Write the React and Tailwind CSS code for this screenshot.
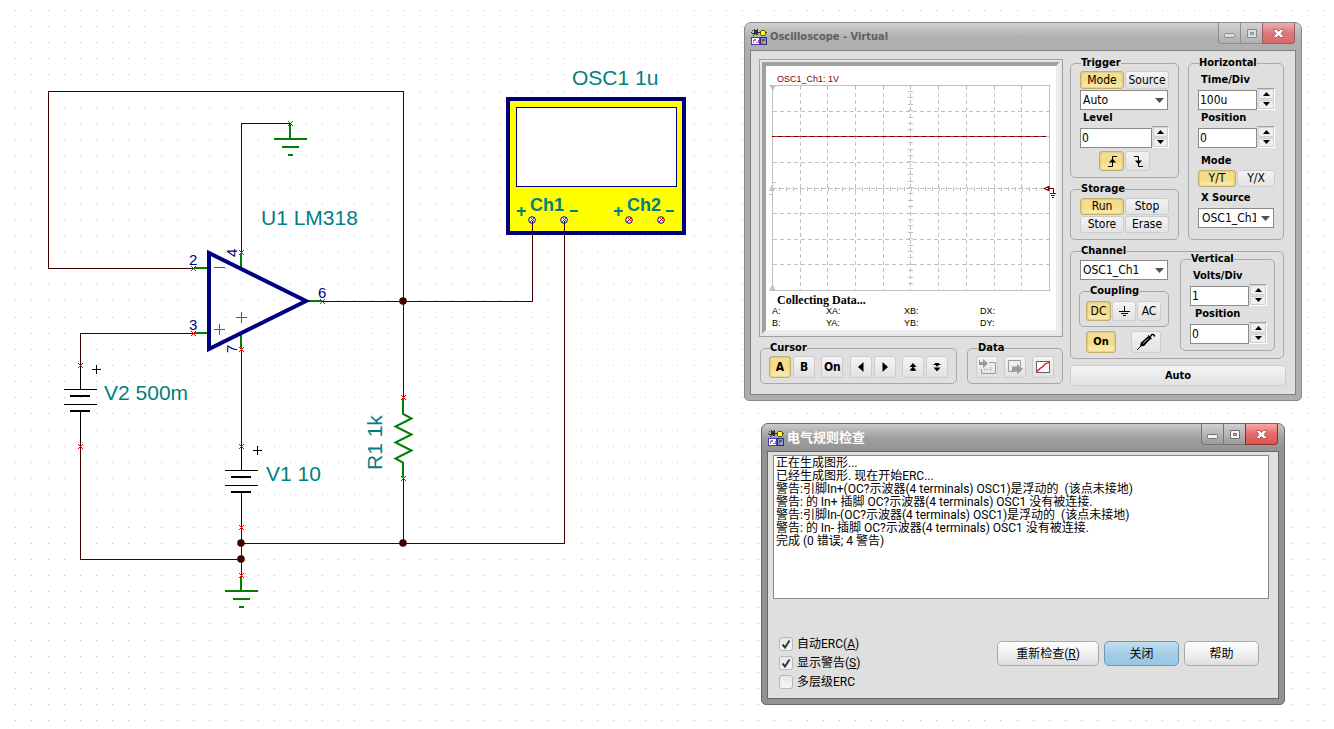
import React from "react";

const UI = "font-['DejaVu_Sans_Condensed','DejaVu_Sans','Noto_Sans_CJK_SC',sans-serif]";
const BOLD = "text-[11px] leading-4 font-bold";

/* ---------- Schematic ---------- */

const dots = (() => {
  let d = "";
  for (let i = 0; i < 160; i++)
    for (let j = 0; j < 90; j++)
      d += `M${Math.floor(15.75 + 16.15 * i)} ${Math.floor(10.25 + 16.15 * j)}h1v1h-1z`;
  return d;
})();

const PINS = [
  [193, 268], [193, 333], [322, 301], [241, 252], [241, 349], [290, 123],
  [80, 365], [80, 446], [241, 446], [241, 527], [241, 575], [403, 397], [403, 478],
];
const NODES = [[403, 301], [241, 543], [241, 559], [403, 543]];
const TERMINALS = [532, 564, 629, 661];

const cross = (x, y, r) => {
  let d = "";
  for (let k = -r; k <= r; k++) {
    d += `M${x + k} ${y + k}h1v1h-1z`;
    if (k) d += `M${x + k} ${y - k}h1v1h-1z`;
  }
  return d;
};

function Ground({ x, y }) {
  return (
    <g stroke="#008000" strokeWidth="2">
      <path d={`M${x} ${y}v15M${x - 16} ${y + 15}h33M${x - 8} ${y + 23}h17M${x - 2} ${y + 31}h5`} />
    </g>
  );
}

function Battery({ x, top, cell, bottom }) {
  return (
    <g stroke="#000" fill="none" shapeRendering="crispEdges">
      <path d={`M${x}.5 ${top}V${cell}M${x - 16} ${cell}.5h33M${x - 16} ${cell + 15}.5h33M${x}.5 ${cell + 22}V${bottom}`} />
      <path strokeWidth="2" d={`M${x - 10} ${cell + 7}h20M${x - 10} ${cell + 22}h20`} />
      <path d={`M${x + 12} ${top + 4}.5h9M${x + 16}.5 ${top}v9`} />
    </g>
  );
}

function Schematic() {
  return (
    <svg className="absolute inset-0 h-full w-full font-['Liberation_Sans',Arial,sans-serif]" role="img" aria-label="Circuit schematic">
      <path d={dots} fill="#c0c0c0" shapeRendering="crispEdges" />
      <g stroke="#400000" fill="none" shapeRendering="crispEdges">
        <path d="M193 268.5H48.5V91.5H403.5V397" />
        <path d="M241.5 252V123.5H290" />
        <path d="M322 301.5H532.5V222" />
        <path d="M193 333.5H80.5V365M80.5 446V559.5H241" />
        <path d="M241.5 349V446M241.5 527V575M403.5 478V543" />
        <path d="M241 543.5H564.5V222" />
      </g>
      <Ground x={290} y={124} />
      <Ground x={241} y={576} />
      <path d="M194 268h14M194 333h14M307 301h15M241 253v15M241 334v15" stroke="#008000" strokeWidth="2" />
      <path d="M209 253V349L306 301Z" fill="none" stroke="#000080" strokeWidth="4" />
      <path d="M214 267.5h11M214 329.5h11M219.5 324v11M236 317.5h11M241.5 312v11" stroke="#008080" shapeRendering="crispEdges" />
      <path d="M403 398v16l8.500 4.500l-16 8l16 8l-16 8l16 8l-16 8l7.500 4v15" fill="none" stroke="#008000" strokeWidth="2" />
      <Battery x={80} top={365} cell={389} bottom={446} />
      <Battery x={241} top={446} cell={470} bottom={527} />

      <rect x="508" y="99" width="176" height="134" fill="#ff0" stroke="#000080" strokeWidth="4" />
      <rect x="516.500" y="107.500" width="160" height="79" fill="#fff" stroke="#000080" />
      <g fill="#008080" fontSize="18" fontWeight="bold">
        <text x="530" y="211">Ch1</text>
        <text x="627" y="211">Ch2</text>
      </g>
      <path d="M517 211h9M521.500 207v9M570 211h8M614 211h9M618.500 207v9M666 211h8" stroke="#008080" strokeWidth="2" />
      {TERMINALS.map((x) => (
        <circle key={x} cx={x} cy="220" r="3.300" fill="#fff" stroke="#000080" />
      ))}
      <path d={TERMINALS.map((x) => cross(x, 219, 2)).join("")} fill="#f00000" shapeRendering="crispEdges" />
      <path d="M532.500 221v12M564.500 221v12" stroke="#400000" shapeRendering="crispEdges" />

      <path d={PINS.map(([x, y]) => cross(x, y, 2)).join("")} fill="#f00000" shapeRendering="crispEdges" />
      {NODES.map(([x, y]) => (
        <circle key={`${x}-${y}`} cx={x} cy={y} r="3.800" fill="#400000" />
      ))}

      <g fill="#008080" fontSize="21">
        <text x="572" y="85">OSC1 1u</text>
        <text x="261" y="225">U1 LM318</text>
        <text x="104" y="400">V2 500m</text>
        <text x="266" y="481">V1 10</text>
        <text transform="translate(382 470) rotate(-90)">R1 1k</text>
      </g>
      <g fill="#000080" fontSize="15">
        <text x="189" y="265">2</text>
        <text x="189" y="330">3</text>
        <text x="318" y="298">6</text>
        <text transform="translate(237 257) rotate(-90)">4</text>
        <text transform="translate(237 353) rotate(-90)">7</text>
      </g>
    </svg>
  );
}

/* ---------- Window chrome ---------- */

function AppIcon() {
  return (
    <svg className="h-4 w-4 shrink-0" viewBox="0 0 16 16" aria-hidden="true" shapeRendering="crispEdges">
      <path d="M1 1h1v1h1V0h1v1h2V0h1v6H5V5H4v1H3V5H1V4h2V2H1zM0 3h1v1H0zM2 6h1v1H2zM7 3h2v1H7z" fill="#303030" />
      <path d="M10 1h4v1h1v4h-1v1h-4V6H9V2h1z" fill="#605800" />
      <path d="M10 2h4v4h-4z" fill="#ffff20" />
      <path d="M15 3h1v1h-1z" fill="#303030" />
      <rect x="0.500" y="8.500" width="8" height="7" fill="#fff" stroke="#4040b0" />
      <rect x="9.500" y="8.500" width="6" height="7" fill="#8090c0" stroke="#303080" />
      <path d="M2 11h1v-1h2v3h2v-2h1v3H5v-2H3v2H2z" fill="#d050e0" />
      <path d="M11 10h3v2h-3z" fill="#50606a" />
      <path d="M11 13h1v1h-1z" fill="#e03030" />
      <path d="M13 13h1v1h-1z" fill="#fff" />
    </svg>
  );
}

function WindowButtons({ active }) {
  const plain = active
    ? "border-[#747474] from-[#d0d0d0] to-[#9c9c9c]"
    : "border-[#8e8e8e] from-[#d2d2d2] to-[#b0b0b0]";
  const close = active
    ? "border-[#8a3030] from-[#f6a8a4] via-[#e66a68] to-[#e05450]"
    : "border-[#9a5a5a] from-[#eab0ae] via-[#d97a79] to-[#d86a68]";
  const ink = active ? "#f4f4f4" : "#dcdcdc";
  const edge = active ? "#707070" : "#8c8c8c";
  return (
    <div className="flex self-start">
      <button aria-label="Minimize" className={`grid h-[21px] w-[22px] place-items-center rounded-bl border-b border-l bg-linear-to-b ${plain}`}>
        <svg width="13" height="11" viewBox="0 0 13 11"><rect x="1.500" y="5.500" width="10" height="4" rx="1" fill={ink} stroke={edge} /></svg>
      </button>
      <button aria-label="Maximize" className={`grid h-[21px] w-[22px] place-items-center border-b border-l bg-linear-to-b ${plain}`}>
        <svg width="12" height="11" viewBox="0 0 12 11"><path fillRule="evenodd" d="M1.500 1.500h9v8h-9zM4.500 4.500h3v2h-3z" fill={ink} stroke={edge} /></svg>
      </button>
      <button aria-label="Close" className={`grid h-[21px] w-[33px] place-items-center rounded-br border-x border-b bg-linear-to-b ${close}`}>
        <svg width="13" height="11" viewBox="0 0 13 11"><path d="M1.500 1.500h3l2 2l2-2h3v1l-2.500 3l2.500 3v1h-3l-2-2l-2 2h-3v-1l2.500-3l-2.500-3z" fill="#fff" stroke="#9c4c4c" strokeWidth="0.800" /></svg>
      </button>
    </div>
  );
}

/* ---------- Controls ---------- */

const ON = "border-[#c3ae6c] bg-linear-to-b from-[#f3dfa0] via-[#f5dc80] to-[#fbeeb8] shadow-[inset_0_0_2px_#b89c50]";
const OFF = "border-[#cdcdcd] bg-linear-to-b from-[#f4f4f4] to-[#e2e2e2]";

function Btn({ on, className = "", children, ...rest }) {
  return (
    <button
      aria-pressed={on ? true : undefined}
      className={`flex items-center justify-center rounded-[3px] border whitespace-nowrap ${on ? ON : OFF} ${className}`}
      {...rest}
    >
      {children}
    </button>
  );
}

function Group({ title, className = "", legend = "", children }) {
  return (
    <fieldset className={`min-w-0 rounded-[5px] border border-[#a8a8a8] ${className}`}>
      <legend className={`text-[11px] leading-3 font-bold ${legend}`}>{title}</legend>
      {children}
    </fieldset>
  );
}

function Select({ id, value, label, className = "", pad = "pl-[2px] pr-[15px]" }) {
  return (
    <div className={`grid h-5 border border-[#8a8a8a] bg-white ${className}`}>
      <select id={id} aria-label={label} defaultValue={value} className={`col-start-1 row-start-1 w-full min-w-0 appearance-none overflow-hidden bg-transparent text-[12px] leading-[18px] ${pad}`}>
        <option>{value}</option>
      </select>
      <svg className="pointer-events-none col-start-1 row-start-1 mr-[3px] self-center justify-self-end" width="9" height="5" viewBox="0 0 9 5" aria-hidden="true">
        <path d="M0 0h9L4.500 5z" fill="#505050" />
      </svg>
    </div>
  );
}

function Spinner({ id, value, width }) {
  return (
    <div className="flex items-end">
      <input id={id} defaultValue={value} className={`h-5 border border-[#8a8a8a] bg-white px-px text-[12px] leading-[18px] ${width}`} />
      <div className="flex h-[22px] w-[18px] flex-col gap-px border-t border-r border-b border-t-[#a0a0a0] border-r-white border-b-white pl-px">
        <button aria-label="Increase" className="grid flex-1 place-items-center rounded-[2px] border border-[#cfcfcf] bg-[#efefef]">
          <svg width="7" height="4" viewBox="0 0 7 4"><path d="M0 4h7L3.500 0z" /></svg>
        </button>
        <button aria-label="Decrease" className="grid flex-1 place-items-center rounded-[2px] border border-[#cfcfcf] bg-[#efefef]">
          <svg width="7" height="4" viewBox="0 0 7 4"><path d="M0 0h7L3.500 4z" /></svg>
        </button>
      </div>
    </div>
  );
}

/* ---------- Oscilloscope ---------- */

const GRID_X = [800, 827, 855, 883, 938, 966, 994, 1021];
const GRID_Y = [111, 136, 162, 213, 239, 264];

function Screen() {
  const ticksY = Array.from({ length: 31 }, (_, i) => 91 + Math.round(i * 6.4));
  const ticksX = Array.from({ length: 38 }, (_, i) => 779 + Math.round(i * 6.95));
  return (
    <svg className="block h-[264px] w-full bg-white" viewBox="766 66 290 264" role="img" aria-label="Oscilloscope trace">
      <text x="777" y="82" fontSize="9" fill="#800000" className="font-['Liberation_Sans',Arial,sans-serif]">OSC1_Ch1: 1V</text>
      <g fill="none" stroke="#c0c0c0" shapeRendering="crispEdges">
        <path d="M772.500 85.500H1049.500V290.500H772.500Z" />
        <path strokeDasharray="4 3" d={GRID_X.map((x) => `M${x}.5 86V290`).join("") + "M910.500 86V290"} />
        <path strokeDasharray="4 3" d={GRID_Y.map((y) => `M773 ${y}.5H1049`).join("") + "M773 188.500H1049"} />
        <path d={ticksY.map((y) => `M908 ${y}.5h5`).join("")} />
        <path d={ticksX.map((x) => `M${x}.5 187v4`).join("")} />
        <path d="M772 182.500h4M769 194.500h4" />
      </g>
      <path d="M769 85h7l-3 6zM769 191l3-6l3 6zM769 291l3.500-7l3.500 7z" fill="#c0c0c0" />
      <path d="M772 136.500H1046" stroke="#5c0000" shapeRendering="crispEdges" />
      <path d="M774 136.500H1046" stroke="#c42020" strokeDasharray="4 4" shapeRendering="crispEdges" />
      <path d="M1043 188.500l6.500-3v6z" fill="#800000" />
      <path d="M1046 188.500h2" stroke="#fff" />
      <path d="M1049 188.500h4.500v5M1050 193.500h6M1051 195.500h4M1052 197.500h2" fill="none" stroke="#800000" shapeRendering="crispEdges" />
      <text x="777" y="304" fontSize="12" fontWeight="bold" className="font-['Liberation_Serif',serif]">Collecting Data...</text>
      <g fontSize="9" className="font-['Liberation_Sans',Arial,sans-serif]">
        <text x="772" y="314">A:</text>
        <text x="826" y="314">XA:</text>
        <text x="904" y="314">XB:</text>
        <text x="980" y="314">DX:</text>
        <text x="772" y="326">B:</text>
        <text x="826" y="326">YA:</text>
        <text x="904" y="326">YB:</text>
        <text x="980" y="326">DY:</text>
      </g>
    </svg>
  );
}

function CursorAndData() {
  const b = "h-[22px] w-[22px] text-[12px] font-bold";
  return (
    <div className="mt-[5px] flex gap-[9px]">
      <Group title="Cursor" legend="ml-px" className="mr-px ml-px flex-1 px-2 pb-[5px]">
        <div className="flex justify-between pt-[2px]">
          <div className="flex gap-[2px]"><Btn on className={b}>A</Btn><Btn className={b}>B</Btn></div>
          <Btn className={b}>On</Btn>
          <div className="flex gap-[2px]">
            <Btn className={b} aria-label="Cursor left"><svg width="16" height="16" viewBox="0 0 16 16"><path d="M10.500 3v10L5 8z" /></svg></Btn>
            <Btn className={b} aria-label="Cursor right"><svg width="16" height="16" viewBox="0 0 16 16"><path d="M5.500 3v10L11 8z" /></svg></Btn>
          </div>
          <div className="flex gap-[2px]">
            <Btn className={b} aria-label="Cursor up"><svg width="16" height="16" viewBox="0 0 16 16"><path d="M4.500 8L8 4l3.500 4zM4.500 11.500L8 7.500l3.500 4zM6.500 11h3v1h-3z" /></svg></Btn>
            <Btn className={b} aria-label="Cursor down"><svg width="16" height="16" viewBox="0 0 16 16"><path d="M4.500 5h7v1h-2L8 8 6.500 6h-2zM4.500 8.500h7L8 12.500zM6 4h4v1H6z" /></svg></Btn>
          </div>
        </div>
      </Group>
      <Group title="Data" legend="ml-[2px]" className="w-24 px-2 pb-[5px]">
        <div className="flex justify-between pt-[2px]">
          <Btn className={b} aria-label="Import data">
            <svg width="18" height="18" viewBox="0 0 18 18"><path d="M3.500 11v4.500h14v-11H11" fill="none" stroke="#999" /><path d="M12.500 9v4M10.500 11.500h-4v-1" fill="none" stroke="#b8b8b8" /><path d="M1 2h1v2h3V1l5 4.500L5 10V7H1z" fill="#999" /></svg>
          </Btn>
          <Btn className={b} aria-label="Export data">
            <svg width="18" height="18" viewBox="0 0 18 18"><path d="M9 13.500H2.500v-11h12V8" fill="none" stroke="#999" /><path d="M6 8.500h5V6l6 5-6 5.500v-3H6z" fill="#999" /></svg>
          </Btn>
          <Btn className={b} aria-label="Show curve">
            <svg width="16" height="16" viewBox="0 0 16 16"><rect x="1.500" y="2.500" width="13" height="11" fill="#fff" stroke="#606060" /><path d="M2 12.500L5 9.500L8 7.500L10 5L14 3.500" fill="none" stroke="#f00000" strokeWidth="1.300" /></svg>
          </Btn>
        </div>
      </Group>
    </div>
  );
}

function TriggerGroup() {
  return (
    <Group title="Trigger" legend="ml-px" className="px-[9px] pb-[6px]">
      <div className="flex gap-px pt-[2px] text-[12px] leading-[15px]">
        <Btn on className="h-[18px] flex-1">Mode</Btn>
        <Btn className="h-[18px] flex-1">Source</Btn>
      </div>
      <Select value="Auto" label="Trigger mode" className="mt-px w-[88px]" />
      <label htmlFor="level" className={`block pl-[3px] ${BOLD}`}>Level</label>
      <Spinner id="level" value="0" width="w-[72px]" />
      <div className="mt-[3px] flex justify-center gap-px">
        <Btn on className="h-5 w-[25px]" aria-label="Rising edge">
          <svg width="14" height="14" viewBox="0 0 14 14"><path d="M3 12.500h4.500v-10H12" fill="none" stroke="#000" /><path d="M4 8.500L7.500 4.500L11 8.500z" /></svg>
        </Btn>
        <Btn className="h-5 w-[25px]" aria-label="Falling edge">
          <svg width="14" height="14" viewBox="0 0 14 14"><path d="M3 2.500h4.500v10H12" fill="none" stroke="#000" /><path d="M4 6.500h7L7.500 10.500z" /></svg>
        </Btn>
      </div>
    </Group>
  );
}

function StorageGroup() {
  const b = "h-[17px]";
  return (
    <Group title="Storage" legend="ml-px" className="mt-[5px] px-[9px] pb-[6px]">
      <div className="grid grid-cols-2 gap-px pt-[3px] text-[12px] leading-[15px]">
        <Btn on className={b}>Run</Btn>
        <Btn className={b}>Stop</Btn>
        <Btn className={b}>Store</Btn>
        <Btn className={b}>Erase</Btn>
      </div>
    </Group>
  );
}

function HorizontalGroup() {
  return (
    <Group title="Horizontal" legend="ml-px" className="w-24 pr-2 pl-[9px]">
      <label htmlFor="timediv" className={`block pt-[3px] pl-[3px] ${BOLD}`}>Time/Div</label>
      <Spinner id="timediv" value="100u" width="w-[59px]" />
      <label htmlFor="hpos" className={`block pl-[3px] ${BOLD}`}>Position</label>
      <Spinner id="hpos" value="0" width="w-[59px]" />
      <div className={`mt-[5px] pl-[3px] ${BOLD}`}>Mode</div>
      <div className="mt-px flex gap-px text-[12px] leading-[15px]">
        <Btn on className="h-[17px] w-[38px]">Y/T</Btn>
        <Btn className="h-[17px] w-[38px]">Y/X</Btn>
      </div>
      <label htmlFor="xsource" className={`mt-[3px] block pl-[3px] ${BOLD}`}>X Source</label>
      <Select id="xsource" value="OSC1_Ch1" className="mt-[2px] w-[76px]" pad="pl-[3px] pr-[17px]" />
    </Group>
  );
}

function ChannelGroup() {
  return (
    <Group title="Channel" legend="ml-2.5" className="mt-[5px] mr-[2px] pb-[5px]">
      <div className="flex justify-between pr-[8px] pl-[8px]">
        <div className="w-[90px] pt-[3px]">
          <Select value="OSC1_Ch1" label="Channel" className="ml-px w-[88px]" />
          <Group title="Coupling" legend="ml-1" className="mt-[5px] px-[6px] pb-[5px]">
            <div className="flex gap-px pt-1 text-[12px]">
              <Btn on className="h-5 w-[25px]">DC</Btn>
              <Btn className="h-5 w-[24px]" aria-label="Ground coupling">
                <svg width="13" height="13" viewBox="0 0 13 13" stroke="#000"><path d="M6.500 1v5M1 6.500h11M3 8.500h7M5 10.500h3" /></svg>
              </Btn>
              <Btn className="h-5 w-[24px]">AC</Btn>
            </div>
          </Group>
          <div className="mt-1 flex justify-between pr-2 pl-[7px]">
            <Btn on className="h-[22px] w-[30px] text-[11px] font-bold">On</Btn>
            <Btn className="h-[22px] w-[30px]" aria-label="Probe">
              <svg width="20" height="18" viewBox="0 0 20 18">
                <path d="M1 17l4-4" fill="none" stroke="#000" />
                <path d="M4 13.500l1-4L12.500 3l2.500 2.500L8 13z" />
                <path d="M7 10.500l5.500-5" fill="none" stroke="#aaa" />
                <path d="M12 2.500l3.500 3.500M14 4l2-2.500h1.500l1.500 2" fill="none" stroke="#000" strokeWidth="1.300" />
              </svg>
            </Btn>
          </div>
        </div>
        <Group title="Vertical" legend="ml-px" className="-mt-1 h-[98px] w-[95px] pl-[9px]">
          <label htmlFor="voltsdiv" className={`block pt-[3px] pl-[3px] ${BOLD}`}>Volts/Div</label>
          <Spinner id="voltsdiv" value="1" width="w-[59px]" />
          <label htmlFor="vpos" className={`block pl-[5px] ${BOLD}`}>Position</label>
          <Spinner id="vpos" value="0" width="w-[59px]" />
        </Group>
      </div>
    </Group>
  );
}

function OscilloscopeWindow() {
  return (
    <section className={`absolute top-[22px] left-[744px] w-[558px] rounded-t-[7px] rounded-b-[5px] border border-[#8a8a8a] bg-[#adadad] px-[5px] pb-[5px] ${UI}`}>
      <header className="-mx-[5px] flex h-[27px] items-center rounded-t-[6px] bg-linear-to-b from-[#d0d0d0] via-[#b2b2b2] to-[#adadad] px-[6px]">
        <AppIcon />
        <h1 className="ml-[3px] flex-1 text-[11px] leading-4 font-bold text-[#606060]">Oscilloscope - Virtual</h1>
        <WindowButtons />
      </header>
      <div className="flex gap-[7px] border border-[#808080] bg-[#dfdfdf] pt-[6px] pr-[9px] pb-2 pl-2">
        <div className="w-[304px] pt-[2px]">
          <div className="border border-[#a0a0a0] bg-[#e6e6e6] p-[2px]">
            <div className="border-4 border-t-[#a0a0a0] border-r-[#ececec] border-b-[#ececec] border-l-[#a0a0a0]">
              <Screen />
            </div>
          </div>
          <CursorAndData />
        </div>
        <div className="flex min-w-0 flex-1 flex-col">
          <div className="mr-[2px] flex justify-between">
            <div className="w-[109px]">
              <TriggerGroup />
              <StorageGroup />
            </div>
            <HorizontalGroup />
          </div>
          <ChannelGroup />
          <Btn className={`mt-[6px] h-[21px] ${BOLD}`}>Auto</Btn>
        </div>
      </div>
    </section>
  );
}

/* ---------- ERC dialog ---------- */

const LOG = [
  "正在生成图形...",
  "已经生成图形. 现在开始ERC...",
  "警告:引脚In+(OC?示波器(4 terminals) OSC1)是浮动的  (该点未接地)",
  "警告: 的 In+ 插脚 OC?示波器(4 terminals) OSC1 没有被连接.",
  "警告:引脚In-(OC?示波器(4 terminals) OSC1)是浮动的  (该点未接地)",
  "警告: 的 In- 插脚 OC?示波器(4 terminals) OSC1 没有被连接.",
  "完成 (0 错误; 4 警告)",
].join("\n");

function Check({ id, checked, children }) {
  return (
    <div className="flex h-[19px] items-center gap-1">
      <span className="grid h-[14px] w-[14px]">
        <input id={id} type="checkbox" defaultChecked={checked} className="peer col-start-1 row-start-1 h-[14px] w-[14px] appearance-none rounded-[3px] border border-[#b8b8b8] bg-linear-to-b from-[#e8e8e8] to-[#f6f6f6]" />
        <svg className="pointer-events-none invisible col-start-1 row-start-1 peer-checked:visible" viewBox="0 0 14 14" aria-hidden="true">
          <path d="M3.500 7.500L6 10.500L10.500 3.500" fill="none" stroke="#383838" strokeWidth="2" />
        </svg>
      </span>
      <label htmlFor={id} className="text-[12px] leading-4">{children}</label>
    </div>
  );
}

function PushButton({ primary, className, children }) {
  const skin = primary
    ? "border-[#6f96b8] from-[#c4dff0] via-[#a4cce6] to-[#98c6e4]"
    : "border-[#a8a8a8] from-white via-[#f0f0f0] to-[#dedede]";
  return (
    <button className={`h-[25px] rounded-[5px] border bg-linear-to-b text-[12px] leading-4 ${skin} ${className}`}>{children}</button>
  );
}

const DIALOG = "font-['Roboto','Noto_Sans_CJK_SC',sans-serif]";

function ErcWindow() {
  return (
    <section className={`absolute top-[423px] left-[761px] w-[524px] rounded-t-[7px] rounded-b-[5px] border border-[#686868] bg-[#929292] px-[5px] pb-[5px] ${DIALOG}`}>
      <header className="-mx-[5px] flex h-[27px] items-center rounded-t-[6px] bg-linear-to-b from-[#cacaca] via-[#a0a0a0] to-[#929292] px-[6px]">
        <AppIcon />
        <h1 className="ml-[3px] flex-1 text-[13px] leading-4 font-bold text-white">电气规则检查</h1>
        <WindowButtons active />
      </header>
      <div className="border border-[#686868] bg-[#dfdfdf] pt-[3px] pb-[7px]">
        <div className="flex pr-[9px] pl-[5px]">
          <textarea readOnly wrap="off" aria-label="ERC" defaultValue={LOG} className="h-36 flex-1 resize-none overflow-hidden border border-[#8a8a8a] bg-white px-[2px] pt-px text-[12px] leading-[13px] whitespace-pre" />
        </div>
        <div className="mt-[35px] flex items-start justify-between pr-[19px] pl-[11px]">
          <div>
            <Check id="auto-erc" checked>自动ERC(<u>A</u>)</Check>
            <Check id="warnings" checked>显示警告(<u>S</u>)</Check>
            <Check id="multi">多层级ERC</Check>
          </div>
          <div className="flex gap-[5px] pt-[7px]">
            <PushButton className="w-[102px]">重新检查(<u>R</u>)</PushButton>
            <PushButton primary className="w-[75px]">关闭</PushButton>
            <PushButton className="w-[75px]">帮助</PushButton>
          </div>
        </div>
      </div>
    </section>
  );
}

export default function App() {
  return (
    <main className="relative h-screen overflow-hidden bg-white text-black">
      <Schematic />
      <OscilloscopeWindow />
      <ErcWindow />
    </main>
  );
}
